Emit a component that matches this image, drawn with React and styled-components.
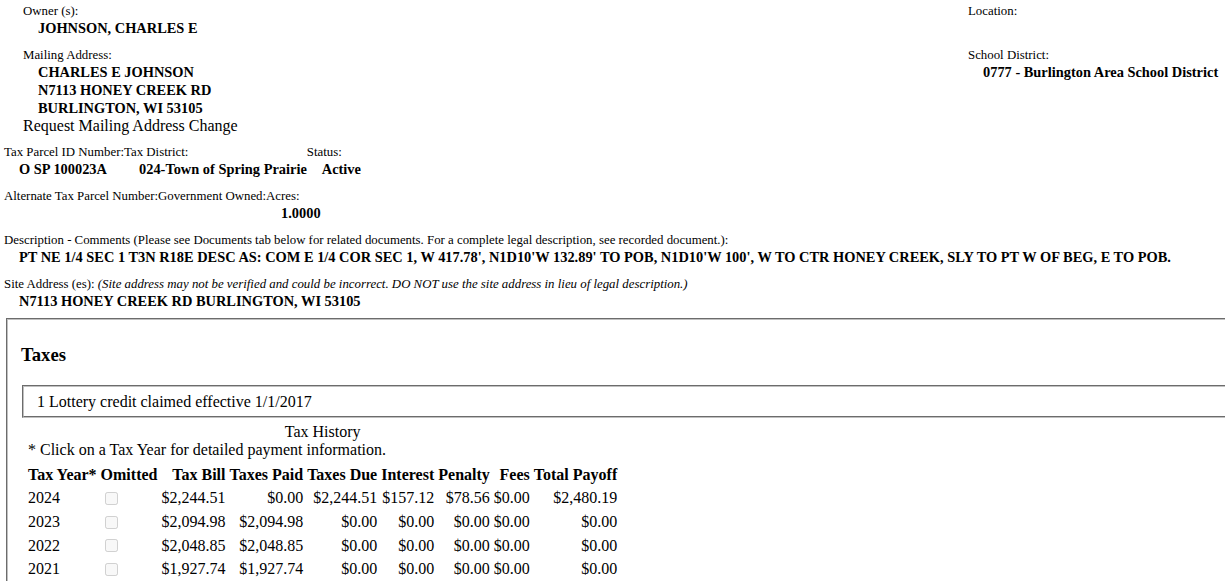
import styled, { createGlobalStyle } from "styled-components";

const GlobalStyle = createGlobalStyle`
  html, body {
    margin: 0;
    padding: 0;
    overflow: hidden;
    background: #fff;
  }
  body {
    font-family: "Liberation Serif", "Times New Roman", serif;
    color: #000;
  }
`;

const Page = styled.div`
  width: 1225px;
  padding-top: 3px;
`;

const TopGrid = styled.div`
  display: grid;
  grid-template-columns: 968px 1fr;
`;

const Column = styled.div`
  padding-left: ${(p) => p.$indent || 0}px;
`;

const Field = styled.div`
  margin-bottom: ${(p) => (p.$gap === undefined ? 10 : p.$gap)}px;
`;

const Label = styled.div`
  font-size: 12.85px;
  line-height: 16px;
  white-space: nowrap;

  em {
    font-style: italic;
  }
`;

const Value = styled.div`
  font-size: 14.4px;
  font-weight: bold;
  line-height: 18px;
  padding-left: 15px;
  white-space: nowrap;
  min-height: 18px;
`;

const RequestLink = styled.div`
  font-size: 16px;
  line-height: 18px;
`;

const Lower = styled.div`
  padding-left: 4px;
`;

const FieldRow = styled.div`
  display: flex;
  margin-bottom: 10px;
`;

const Panel = styled.div`
  margin-left: 6px;
  width: 1260px;
  border: 2px groove #c0c0c0;
  border-right: none;
  padding: 24px 0 20px 13px;
`;

const Heading = styled.h3`
  margin: 0;
  font-size: 18.72px;
  line-height: 22px;
  font-weight: bold;
`;

const Notice = styled.div`
  margin: 19px 0 0 1px;
  border: 2px groove #c0c0c0;
  border-right: none;
  padding: 6px 13px 5px;
  font-size: 16px;
  line-height: 18px;
`;

const HistoryTable = styled.table`
  margin: 5px 0 0 4px;
  border-spacing: 2px;
  font-size: 16px;
  line-height: normal;

  caption {
    line-height: 18px;
    padding-bottom: 4px;
  }

  th,
  td {
    padding: 1px;
    white-space: nowrap;
  }

  th {
    font-weight: bold;
  }
`;

const Note = styled.div`
  text-align: left;
  padding-left: 3px;
`;

const Cell = styled.td`
  text-align: ${(p) => (p.$right ? "right" : "left")};
`;

const HeadCell = styled.th`
  text-align: ${(p) => (p.$right ? "right" : "left")};
`;

const Check = styled.input`
  margin: 3px 3px 3px 4px;
  width: 13px;
  height: 13px;
  vertical-align: middle;
`;

const rows = [
  ["2024", "$2,244.51", "$0.00", "$2,244.51", "$157.12", "$78.56", "$0.00", "$2,480.19"],
  ["2023", "$2,094.98", "$2,094.98", "$0.00", "$0.00", "$0.00", "$0.00", "$0.00"],
  ["2022", "$2,048.85", "$2,048.85", "$0.00", "$0.00", "$0.00", "$0.00", "$0.00"],
  ["2021", "$1,927.74", "$1,927.74", "$0.00", "$0.00", "$0.00", "$0.00", "$0.00"],
];

const moneyHeads = ["Tax Bill", "Taxes Paid", "Taxes Due", "Interest", "Penalty", "Fees", "Total Payoff"];

function App() {
  return (
    <Page>
      <GlobalStyle />
      <TopGrid>
        <Column $indent={23}>
          <Field>
            <Label>Owner (s):</Label>
            <Value>JOHNSON, CHARLES E</Value>
          </Field>
          <Field $gap={0}>
            <Label>Mailing Address:</Label>
            <Value>CHARLES E JOHNSON</Value>
            <Value>N7113 HONEY CREEK RD</Value>
            <Value>BURLINGTON, WI 53105</Value>
          </Field>
          <RequestLink>Request Mailing Address Change</RequestLink>
        </Column>
        <Column>
          <Field>
            <Label>Location:</Label>
            <Value></Value>
          </Field>
          <Field>
            <Label>School District:</Label>
            <Value>0777 - Burlington Area School District</Value>
          </Field>
        </Column>
      </TopGrid>

      <Lower>
        <FieldRow style={{ marginTop: 9 }}>
          <div>
            <Label>Tax Parcel ID Number:</Label>
            <Value>O SP 100023A</Value>
          </div>
          <div>
            <Label>Tax District:</Label>
            <Value>024-Town of Spring Prairie</Value>
          </div>
          <div>
            <Label>Status:</Label>
            <Value>Active</Value>
          </div>
        </FieldRow>

        <FieldRow>
          <div>
            <Label>Alternate Tax Parcel Number:</Label>
            <Value></Value>
          </div>
          <div>
            <Label>Government Owned:</Label>
            <Value></Value>
          </div>
          <div>
            <Label>Acres:</Label>
            <Value>1.0000</Value>
          </div>
        </FieldRow>

        <Field>
          <Label>
            Description - Comments (Please see Documents tab below for related documents. For a complete legal
            description, see recorded document.):
          </Label>
          <Value>
            PT NE 1/4 SEC 1 T3N R18E DESC AS: COM E 1/4 COR SEC 1, W 417.78', N1D10'W 132.89' TO POB, N1D10'W 100', W
            TO CTR HONEY CREEK, SLY TO PT W OF BEG, E TO POB.
          </Value>
        </Field>

        <Field $gap={8}>
          <Label>
            Site Address (es):{" "}
            <em>
              (Site address may not be verified and could be incorrect. DO NOT use the site address in lieu of legal
              description.)
            </em>
          </Label>
          <Value>N7113 HONEY CREEK RD BURLINGTON, WI 53105</Value>
        </Field>
      </Lower>

      <Panel>
        <Heading>Taxes</Heading>
        <Notice>1 Lottery credit claimed effective 1/1/2017</Notice>
        <HistoryTable>
          <caption>
            Tax History
            <Note>* Click on a Tax Year for detailed payment information.</Note>
          </caption>
          <thead>
            <tr>
              <HeadCell>Tax Year*</HeadCell>
              <HeadCell>Omitted</HeadCell>
              {moneyHeads.map((h) => (
                <HeadCell key={h} $right>
                  {h}
                </HeadCell>
              ))}
            </tr>
          </thead>
          <tbody>
            {rows.map(([year, ...money]) => (
              <tr key={year}>
                <Cell>{year}</Cell>
                <Cell>
                  <Check type="checkbox" disabled />
                </Cell>
                {money.map((m, i) => (
                  <Cell key={i} $right>
                    {m}
                  </Cell>
                ))}
              </tr>
            ))}
          </tbody>
        </HistoryTable>
      </Panel>
    </Page>
  );
}

export default App;
